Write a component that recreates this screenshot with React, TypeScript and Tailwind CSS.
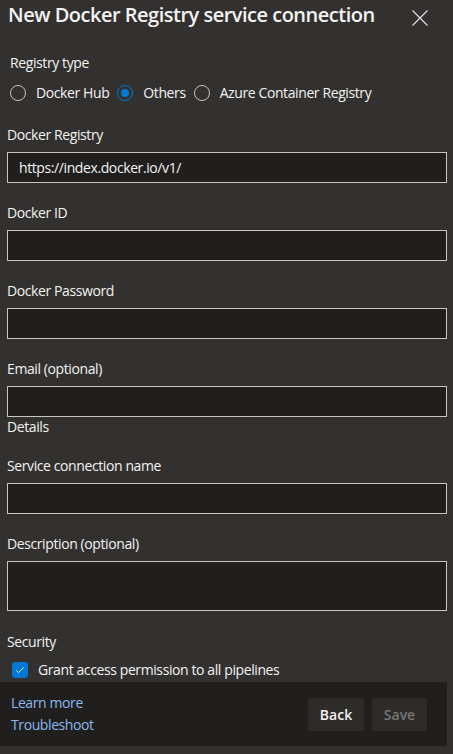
const font = { fontFamily: '"Open Sans", "Noto Sans", sans-serif' };

function Field({ label, value, tall }: { label: string; value?: string; tall?: boolean }) {
  return (
    <div className="flex flex-col">
      <div className="text-[14px] leading-5 tracking-[-0.4px] text-[#f3f2f1]">{label}</div>
      <div
        className={`mt-[7px] flex items-center border border-[#c8c6c4] bg-[#201f1e] pl-[11px] text-[14px] tracking-[-0.4px] text-[#f3f2f1] ${
          tall ? "h-[50px]" : "h-[31px]"
        }`}
      >
        {value}
      </div>
    </div>
  );
}

function Radio({ label, checked }: { label: string; checked?: boolean }) {
  return (
    <div className="flex items-center gap-[10px]">
      <span
        className={`flex h-4 w-4 items-center justify-center rounded-full border ${
          checked ? "border-[#0078d4]" : "border-[#c8c6c4]"
        }`}
      >
        {checked && <span className="h-2 w-2 rounded-full bg-[#0078d4]" />}
      </span>
      <span className="text-[14px] leading-5 tracking-[-0.4px] text-[#f3f2f1]">{label}</span>
    </div>
  );
}

export default function App() {
  return (
    <div className="flex h-[754px] w-[453px] flex-col overflow-hidden bg-[#323130]" style={font}>
      <div className="flex h-[30px] items-center justify-between pl-2 pr-[25px]">
        <h1 className="text-[20px] font-semibold leading-[30px] tracking-[-0.5px] text-[#f3f2f1]">
          New Docker Registry service connection
        </h1>
        <svg viewBox="0 0 16 16" className="mt-[5px] h-4 w-4" fill="none" stroke="#e1dfdd" strokeWidth="1.2">
          <path d="M0.5 0.5l15 15M15.5 0.5l-15 15" />
        </svg>
      </div>

      <div className="flex w-[447px] flex-col pl-[7px]">
        <div className="mt-[23px] pl-[3px] text-[14px] leading-5 tracking-[-0.4px] text-[#f3f2f1]">Registry type</div>
        <div className="mt-[10px] flex items-center gap-2 pl-[3px]">
          <Radio label="Docker Hub" />
          <Radio label="Others" checked />
          <Radio label="Azure Container Registry" />
        </div>

        <div className="mt-[22px] flex flex-col gap-5">
          <Field label="Docker Registry" value="https://index.docker.io/v1/" />
          <Field label="Docker ID" />
          <Field label="Docker Password" />
          <Field label="Email (optional)" />
        </div>
        <div className="text-[14px] leading-5 tracking-[-0.4px] text-[#f3f2f1]">Details</div>

        <div className="mt-[19px] flex flex-col gap-5">
          <Field label="Service connection name" />
          <Field label="Description (optional)" tall />
        </div>

        <div className="mt-[21px] text-[14px] leading-5 tracking-[-0.4px] text-[#f3f2f1]">Security</div>
        <div className="mt-2 flex items-center gap-[10px] pl-[5px]">
          <span className="flex h-4 w-4 items-center justify-center rounded-[3px] bg-[#0078d4]">
            <svg viewBox="0 0 16 16" className="h-3 w-3" fill="none" stroke="white" strokeWidth="1.3">
              <path d="M3 8.5l3 3 7-7" />
            </svg>
          </span>
          <span className="text-[14px] leading-5 tracking-[-0.4px] text-[#f3f2f1]">
            Grant access permission to all pipelines
          </span>
        </div>
      </div>

      <div className="mt-[2px] flex h-[64px] w-[447px] items-center justify-between bg-[#201f1e] pl-[11px] pr-[20px]">
        <div className="flex flex-col gap-[2px] text-[14px] leading-5 tracking-[-0.4px] text-[#8ab8ef]">
          <span>Learn more</span>
          <span>Troubleshoot</span>
        </div>
        <div className="flex gap-2">
          <button className="h-[33px] w-[56px] rounded-[2px] bg-[#2d2c2b] text-[14px] font-semibold text-[#f3f2f1]">
            Back
          </button>
          <button className="h-[33px] w-[55px] rounded-[2px] bg-[#2d2c2b] text-[14px] font-semibold text-[#797775]">
            Save
          </button>
        </div>
      </div>
    </div>
  );
}
